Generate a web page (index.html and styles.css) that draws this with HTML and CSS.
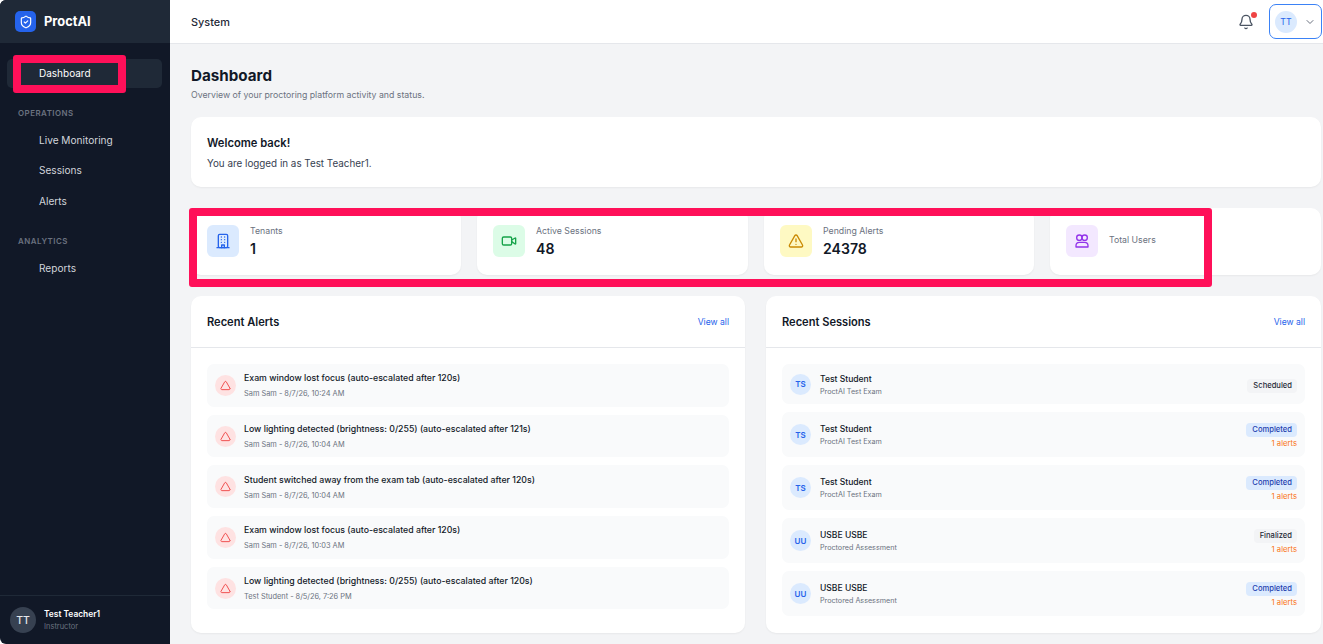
FILE: index.html
```html
<!DOCTYPE html>
<html lang="en">
<head>
<meta charset="utf-8">
<title>ProctAI Dashboard</title>
<link rel="stylesheet" href="styles.css">
</head>
<body>
<div class="app">
  <aside class="sidebar">
    <div class="brand">
      <span class="logo"><svg viewBox="0 0 24 24" width="14" height="14" fill="none" stroke="#fff" stroke-width="2" stroke-linecap="round" stroke-linejoin="round"><path d="M20 13c0 5-3.5 7.5-7.66 8.95a1 1 0 0 1-.67-.01C7.5 20.5 4 18 4 13V6a1 1 0 0 1 1-1c2 0 4.5-1.2 6.24-2.72a1.17 1.17 0 0 1 1.52 0C14.51 3.81 17 5 19 5a1 1 0 0 1 1 1z"/><path d="m9 12 2 2 4-4"/></svg></span>
      <span class="brand-name">ProctAI</span>
    </div>
    <nav class="nav">
      <a class="nav-item active">Dashboard</a>
      <div class="nav-label">OPERATIONS</div>
      <a class="nav-item">Live Monitoring</a>
      <a class="nav-item">Sessions</a>
      <a class="nav-item">Alerts</a>
      <div class="nav-label">ANALYTICS</div>
      <a class="nav-item">Reports</a>
    </nav>
    <div class="side-user">
      <span class="side-avatar">TT</span>
      <div class="side-user-text">
        <div class="side-user-name">Test Teacher1</div>
        <div class="side-user-role">Instructor</div>
      </div>
    </div>
  </aside>
  <div class="content">
    <header class="topbar">
      <div class="topbar-title">System</div>
      <div class="topbar-actions">
        <span class="bell"><svg viewBox="0 0 24 24" width="16" height="16" fill="none" stroke="#4b5563" stroke-width="2" stroke-linecap="round" stroke-linejoin="round"><path d="M10.27 21a2 2 0 0 0 3.46 0"/><path d="M3.26 15.33A1 1 0 0 0 4 17h16a1 1 0 0 0 .74-1.67C19.41 13.96 18 12.5 18 8A6 6 0 0 0 6 8c0 4.5-1.41 5.96-2.74 7.33"/></svg><i class="bell-dot"></i></span>
        <div class="user-btn">
          <span class="user-avatar">TT</span>
          <svg viewBox="0 0 24 24" width="12" height="12" fill="none" stroke="#6b7280" stroke-width="2" stroke-linecap="round" stroke-linejoin="round"><path d="m6 9 6 6 6-6"/></svg>
        </div>
      </div>
    </header>
    <main class="main">
      <h1 class="page-title">Dashboard</h1>
      <p class="page-sub">Overview of your proctoring platform activity and status.</p>
      <section class="welcome">
        <div class="welcome-title">Welcome back!</div>
        <div class="welcome-text">You are logged in as Test Teacher1.</div>
      </section>
      <section class="stats">
        <div class="stat">
          <span class="stat-icon blue"><svg viewBox="0 0 24 24" width="16" height="16" fill="none" stroke="#2563eb" stroke-width="2" stroke-linecap="round" stroke-linejoin="round"><rect x="5" y="2" width="14" height="20" rx="2"/><path d="M3 22h18"/><path d="M9.5 6h.01M14.5 6h.01M9.5 10h.01M14.5 10h.01M9.5 14h.01M14.5 14h.01"/><path d="M10 22v-4h4v4"/></svg></span>
          <div class="stat-text"><div class="stat-label">Tenants</div><div class="stat-value">1</div></div>
        </div>
        <div class="stat">
          <span class="stat-icon green"><svg viewBox="0 0 24 24" width="16" height="16" fill="none" stroke="#16a34a" stroke-width="2" stroke-linecap="round" stroke-linejoin="round"><path d="m16 13 5.22 3.48a.5.5 0 0 0 .78-.42V7.87a.5.5 0 0 0-.75-.43L16 10.5"/><rect x="2" y="6" width="14" height="12" rx="2"/></svg></span>
          <div class="stat-text"><div class="stat-label">Active Sessions</div><div class="stat-value">48</div></div>
        </div>
        <div class="stat">
          <span class="stat-icon yellow"><svg viewBox="0 0 24 24" width="16" height="16" fill="none" stroke="#ca8a04" stroke-width="2" stroke-linecap="round" stroke-linejoin="round"><path d="m21.73 18-8-14a2 2 0 0 0-3.48 0l-8 14A2 2 0 0 0 4 21h16a2 2 0 0 0 1.73-3"/><path d="M12 9v4"/><path d="M12 17h.01"/></svg></span>
          <div class="stat-text"><div class="stat-label">Pending Alerts</div><div class="stat-value">24378</div></div>
        </div>
        <div class="stat">
          <span class="stat-icon purple"><svg viewBox="0 0 24 24" width="16" height="16" fill="none" stroke="#9333ea" stroke-width="2" stroke-linecap="round" stroke-linejoin="round"><circle cx="8" cy="7" r="4"/><circle cx="16" cy="7" r="4"/><path d="M3 21v-2a5 5 0 0 1 5-5h8a5 5 0 0 1 5 5v2Z"/></svg></span>
          <div class="stat-label">Total Users</div>
        </div>
      </section>
      <section class="panels">
        <div class="panel">
          <div class="panel-head"><h2 class="panel-title">Recent Alerts</h2><a class="view-all">View all</a></div>
          <div class="panel-body">
            <div class="alert-row"><span class="alert-icon"><svg viewBox="0 0 24 24" width="11" height="11" fill="none" stroke="#ef4444" stroke-width="2" stroke-linecap="round" stroke-linejoin="round"><path d="m21.73 18-8-14a2 2 0 0 0-3.48 0l-8 14A2 2 0 0 0 4 21h16a2 2 0 0 0 1.73-3"/></svg></span><div class="alert-text"><div class="row-title">Exam window lost focus (auto-escalated after 120s)</div><div class="row-sub">Sam Sam - 8/7/26, 10:24 AM</div></div></div>
            <div class="alert-row"><span class="alert-icon"><svg viewBox="0 0 24 24" width="11" height="11" fill="none" stroke="#ef4444" stroke-width="2" stroke-linecap="round" stroke-linejoin="round"><path d="m21.73 18-8-14a2 2 0 0 0-3.48 0l-8 14A2 2 0 0 0 4 21h16a2 2 0 0 0 1.73-3"/></svg></span><div class="alert-text"><div class="row-title">Low lighting detected (brightness: 0/255) (auto-escalated after 121s)</div><div class="row-sub">Sam Sam - 8/7/26, 10:04 AM</div></div></div>
            <div class="alert-row"><span class="alert-icon"><svg viewBox="0 0 24 24" width="11" height="11" fill="none" stroke="#ef4444" stroke-width="2" stroke-linecap="round" stroke-linejoin="round"><path d="m21.73 18-8-14a2 2 0 0 0-3.48 0l-8 14A2 2 0 0 0 4 21h16a2 2 0 0 0 1.73-3"/></svg></span><div class="alert-text"><div class="row-title">Student switched away from the exam tab (auto-escalated after 120s)</div><div class="row-sub">Sam Sam - 8/7/26, 10:04 AM</div></div></div>
            <div class="alert-row"><span class="alert-icon"><svg viewBox="0 0 24 24" width="11" height="11" fill="none" stroke="#ef4444" stroke-width="2" stroke-linecap="round" stroke-linejoin="round"><path d="m21.73 18-8-14a2 2 0 0 0-3.48 0l-8 14A2 2 0 0 0 4 21h16a2 2 0 0 0 1.73-3"/></svg></span><div class="alert-text"><div class="row-title">Exam window lost focus (auto-escalated after 120s)</div><div class="row-sub">Sam Sam - 8/7/26, 10:03 AM</div></div></div>
            <div class="alert-row"><span class="alert-icon"><svg viewBox="0 0 24 24" width="11" height="11" fill="none" stroke="#ef4444" stroke-width="2" stroke-linecap="round" stroke-linejoin="round"><path d="m21.73 18-8-14a2 2 0 0 0-3.48 0l-8 14A2 2 0 0 0 4 21h16a2 2 0 0 0 1.73-3"/></svg></span><div class="alert-text"><div class="row-title">Low lighting detected (brightness: 0/255) (auto-escalated after 120s)</div><div class="row-sub">Test Student - 8/5/26, 7:26 PM</div></div></div>
          </div>
        </div>
        <div class="panel">
          <div class="panel-head"><h2 class="panel-title">Recent Sessions</h2><a class="view-all">View all</a></div>
          <div class="panel-body">
            <div class="session-row short"><span class="session-avatar">TS</span><div class="session-main"><div class="session-title">Test Student</div><div class="session-sub">ProctAI Test Exam</div></div><div class="session-side"><span class="badge gray">Scheduled</span></div></div>
            <div class="session-row"><span class="session-avatar">TS</span><div class="session-main"><div class="session-title">Test Student</div><div class="session-sub">ProctAI Test Exam</div></div><div class="session-side"><span class="badge blue">Completed</span><span class="alerts-count">1 alerts</span></div></div>
            <div class="session-row"><span class="session-avatar">TS</span><div class="session-main"><div class="session-title">Test Student</div><div class="session-sub">ProctAI Test Exam</div></div><div class="session-side"><span class="badge blue">Completed</span><span class="alerts-count">1 alerts</span></div></div>
            <div class="session-row"><span class="session-avatar">UU</span><div class="session-main"><div class="session-title">USBE USBE</div><div class="session-sub">Proctored Assessment</div></div><div class="session-side"><span class="badge gray">Finalized</span><span class="alerts-count">1 alerts</span></div></div>
            <div class="session-row"><span class="session-avatar">UU</span><div class="session-main"><div class="session-title">USBE USBE</div><div class="session-sub">Proctored Assessment</div></div><div class="session-side"><span class="badge blue">Completed</span><span class="alerts-count">1 alerts</span></div></div>
          </div>
        </div>
      </section>
    </main>
  </div>
</div>
<div class="mark mark-nav"></div>
<div class="mark mark-stats"></div>
</body>
</html>
```
FILE: styles.css
```css
* { box-sizing: border-box; }
html, body { margin: 0; height: 100%; overflow: hidden; }
body { font-family: Inter, "Liberation Sans", sans-serif; color: #111827; background: #fff; font-size: 10px; }
.app { display: flex; width: 1323px; height: 644px; }

.sidebar { width: 170px; flex: none; background: #111827; display: flex; flex-direction: column; border-radius: 6px 0 0 6px; }
.brand { height: 43px; background: #1f2937; display: flex; align-items: center; gap: 8px; padding: 0 15px; border-radius: 6px 0 0 0; }
.logo { width: 21px; height: 21px; background: #2563eb; border-radius: 5px; display: flex; align-items: center; justify-content: center; }
.brand-name { color: #fff; font-size: 12.9px; font-weight: 700; }
.nav { flex: 1; padding: 16px 8px 0 7px; }
.nav-item { display: flex; align-items: center; height: 29px; padding: 0 0 1.5px 32px; color: #d1d5db; font-size: 10.1px; border-radius: 5px; margin-bottom: 1.5px; }
.nav-item.active { background: #1f2937; color: #fff; font-size: 10px; }
.nav-label { color: #6b7280; font-size: 7.9px; font-weight: 600; letter-spacing: 0.5px; padding-left: 11px; margin: 20px 0 8px; line-height: 10px; }
.side-user { height: 49px; border-top: 1px solid #1f2937; display: flex; align-items: center; gap: 8px; padding: 0 10px; }
.side-avatar { width: 26px; height: 26px; border-radius: 50%; background: #374151; color: #e5e7eb; display: flex; align-items: center; justify-content: center; font-size: 10.5px; font-weight: 500; }
.side-user-name { color: #fff; font-size: 8.4px; font-weight: 600; line-height: 13px; }
.side-user-role { color: #6b7280; font-size: 7.5px; line-height: 11px; }

.content { flex: 1; min-width: 0; display: flex; flex-direction: column; background: #f3f4f6; }
.topbar { height: 44px; background: #fff; border-bottom: 1px solid #e5e7eb; display: flex; align-items: center; justify-content: space-between; padding: 0 1px 0 21px; }
.topbar-title { font-size: 10.9px; font-weight: 500; color: #1f2937; }
.topbar-actions { display: flex; align-items: center; gap: 15px; }
.bell { position: relative; display: flex; }
.bell-dot { position: absolute; top: -2px; right: -3px; width: 6px; height: 6px; background: #ef4444; border-radius: 50%; }
.user-btn { width: 53px; height: 35px; border: 1.5px solid #3b82f6; border-radius: 7px; display: flex; align-items: center; gap: 7px; padding-left: 5px; }
.user-avatar { width: 22px; height: 22px; border-radius: 50%; background: #dbeafe; color: #2563eb; display: flex; align-items: center; justify-content: center; font-size: 8.75px; }

.main { flex: 1; padding: 22px 2px 0 21px; min-height: 0; }
.page-title { margin: 0; font-size: 15.2px; font-weight: 700; line-height: 20px; }
.page-sub { margin: 3px 0 0; font-size: 8.75px; line-height: 13px; color: #6b7280; }
.welcome { margin-top: 15px; height: 70px; background: #fff; border-radius: 10px; padding: 18px 16px 0; box-shadow: 0 1px 2px rgba(0,0,0,.05); }
.welcome-title { font-size: 11.2px; font-weight: 600; line-height: 17px; }
.welcome-text { margin-top: 4px; font-size: 9.85px; line-height: 15px; color: #374151; }

.stats { margin-top: 21px; display: grid; grid-template-columns: 270px 271px 270px 271px; gap: 16px; }
.stat { height: 67px; background: #fff; border-radius: 10px; display: flex; align-items: center; gap: 11px; padding: 0 16px 2px; box-shadow: 0 1px 2px rgba(0,0,0,.05); }
.stat-icon { width: 32px; height: 32px; border-radius: 6px; flex: none; display: flex; align-items: center; justify-content: center; }
.stat-icon.blue { background: #dbeafe; }
.stat-icon.green { background: #dcfce7; }
.stat-icon.yellow { background: #fef9c3; }
.stat-icon.purple { background: #f3e8ff; }
.stat-text { padding-top: 3px; }
.stat-label { font-size: 8.75px; line-height: 13px; color: #6b7280; }
.stat-value { margin-top: 1px; font-size: 14.1px; font-weight: 600; line-height: 20px; }

.panels { margin-top: 21px; display: grid; grid-template-columns: 554px 555px; gap: 21px; }
.panel { height: 337px; background: #fff; border-radius: 10px; box-shadow: 0 1px 2px rgba(0,0,0,.05); }
.panel-head { height: 52px; border-bottom: 1px solid #e5e7eb; display: flex; align-items: center; justify-content: space-between; padding: 0 16px; }
.panel-title { margin: 0; font-size: 11.1px; font-weight: 600; }
.view-all { font-size: 8.6px; color: #2563eb; }
.panel-body { padding: 16px; display: flex; flex-direction: column; gap: 8px; }
.alert-row { height: 42.7px; background: #f9fafb; border-radius: 7px; display: flex; align-items: center; gap: 8px; padding: 0 8px; }
.alert-icon { width: 21px; height: 21px; border-radius: 50%; background: #fee2e2; flex: none; display: flex; align-items: center; justify-content: center; }
.alert-text { padding-top: 1px; }
.row-title { font-size: 8.75px; font-weight: 500; line-height: 13px; color: #111827; }
.row-sub { margin-top: 3px; font-size: 7.4px; line-height: 11px; color: #6b7280; }
.session-row { height: 45px; background: #f9fafb; border-radius: 7px; display: flex; align-items: center; gap: 9px; padding: 0 8px; }
.session-row.short { height: 40px; }
.session-avatar { width: 21px; height: 21px; border-radius: 50%; background: #dbeafe; color: #2563eb; font-size: 8px; font-weight: 600; flex: none; display: flex; align-items: center; justify-content: center; }
.session-main { flex: 1; padding-top: 1px; }
.session-title { font-size: 8.55px; font-weight: 500; line-height: 13px; color: #111827; }
.session-sub { font-size: 7.2px; line-height: 11px; color: #6b7280; }
.session-side { display: flex; flex-direction: column; align-items: flex-end; gap: 1.5px; padding-top: 3px; }
.badge { font-size: 7.6px; font-weight: 500; line-height: 14px; padding: 0 5px 0 6px; border-radius: 4px; }
.badge.gray { background: #f3f4f6; color: #1f2937; }
.badge.blue { background: #dbeafe; color: #1e40af; }
.alerts-count { font-size: 7.7px; line-height: 11px; color: #f97316; }

.mark { position: absolute; border: 8px solid #ff1059; border-radius: 3px; pointer-events: none; }
.mark-nav { left: 13px; top: 55px; width: 113px; height: 38px; }
.mark-stats { left: 189px; top: 208px; width: 1023px; height: 79px; }
```
